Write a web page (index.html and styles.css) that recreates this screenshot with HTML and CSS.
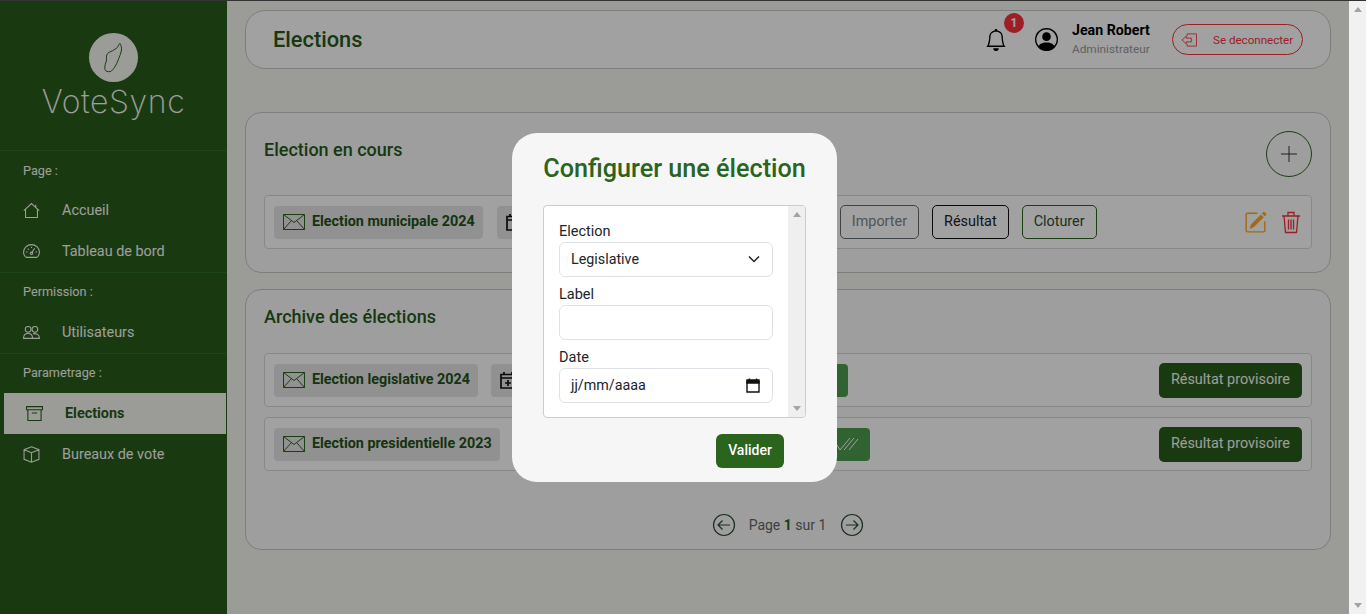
FILE: index.html
```html
<!DOCTYPE html>
<html lang="fr">
<head>
    <meta charset="UTF-8">
    <meta name="viewport" content="width=device-width, initial-scale=1.0">
    <title>VoteSync - Elections</title>
    <link rel="stylesheet" href="styles.css">
</head>
<body>
    <div class="app">
        <aside class="sidebar">
            <div class="brand">
                <div class="brand-logo">
                    <svg width="49" height="49" viewBox="0 0 49 49"><path d="M30.8 10.3C32 12 32.8 14.5 32.5 17C32 20 31 22.5 29.8 25.3C28.5 29 27 32.5 24.8 35.3C23.5 37.5 21.5 38.9 19.8 38.7C17.2 38.5 15.5 37.5 15.8 35.3C15.6 32 17 30 17.5 27C17.2 24 17.5 21.5 18.8 20.3C20.5 18.5 23 18.5 24.8 17C26.5 15.5 28 15.5 28.8 13.7C29.5 12.5 30 11 30.8 10.3Z" fill="none" stroke="#2a641d"/></svg>
                </div>
                <div class="brand-name">VoteSync</div>
            </div>
            <div class="nav-section">
                <div class="nav-label">Page :</div>
                <a class="nav-item"><svg class="nav-icon" viewBox="0 0 16 16"><path d="M.8 8.2 8 1.5l7.2 6.7M2.400 7v7.500h11.200V7M12 5V2.600"/></svg>Accueil</a>
                <a class="nav-item"><svg class="nav-icon" viewBox="0 0 16 16"><path d="M3 13.500h10C14.500 12.500 15.500 10.500 15.500 8.500A7.500 7 0 0 0 .5 8.500C.5 10.500 1.500 12.500 3 13.500ZM8 9.500 11 5M2.700 8.500h1.500M11.800 8.500h1.500M4.500 5.200l1 1M8 3.500v1.300"/><circle cx="8" cy="9.700" r="1.200"/></svg>Tableau de bord</a>
            </div>
            <div class="nav-section">
                <div class="nav-label">Permission :</div>
                <a class="nav-item"><svg class="nav-icon" viewBox="0 0 16 16"><circle cx="4.800" cy="5" r="2.700"/><circle cx="11.200" cy="5" r="2.700"/><path d="M.5 13.500C.5 10.500 2.500 9 4.800 9S9 10.500 9 13.500ZM9.500 9.300C12.500 8.500 15.500 10 15.500 13.500H9"/></svg>Utilisateurs</a>
            </div>
            <div class="nav-section nav-section-last">
                <div class="nav-label">Parametrage :</div>
                <a class="nav-item nav-item-active"><svg class="nav-icon" viewBox="0 0 16 16"><path d="M.5 1.500h15v3H.5ZM1.800 4.500v10h12.400v-10M5.500 7.500h5"/></svg>Elections</a>
                <a class="nav-item"><svg class="nav-icon" viewBox="0 0 16 16"><path d="M8 .7 15 3.500v9L8 15.300 1 12.500v-9ZM1 3.500l7 2.800 7-2.800M8 6.300v9"/></svg>Bureaux de vote</a>
            </div>
        </aside>

        <main class="main">
            <header class="topbar">
                <h1 class="page-title">Elections</h1>
                <div class="topbar-right">
                    <div class="bell">
                        <svg width="22" height="22" viewBox="0 0 16 16" fill="#000"><path d="M8 16a2 2 0 0 0 2-2H6a2 2 0 0 0 2 2zM8 1.918l-.797.161A4.002 4.002 0 0 0 4 6c0 .628-.134 2.197-.459 3.742-.16.767-.376 1.566-.663 2.258h10.244c-.287-.692-.502-1.490-.663-2.258C12.134 8.197 12 6.628 12 6a4.002 4.002 0 0 0-3.203-3.920L8 1.917zM14.220 12c.223.447.481.801.78 1H1c.299-.199.557-.553.78-1C2.680 10.200 3 6.880 3 6c0-2.420 1.720-4.440 4.005-4.901a1 1 0 1 1 1.990 0A5.002 5.002 0 0 1 13 6c0 .880.320 4.200 1.220 6z"/></svg>
                        <span class="badge">1</span>
                    </div>
                    <svg class="avatar" width="23" height="23" viewBox="0 0 16 16" fill="#000"><path d="M11 6a3 3 0 1 1-6 0 3 3 0 0 1 6 0z"/><path fill-rule="evenodd" d="M0 8a8 8 0 1 1 16 0A8 8 0 0 1 0 8zm8-7a7 7 0 0 0-5.468 11.370C3.242 11.226 4.805 10 8 10s4.757 1.225 5.468 2.370A7 7 0 0 0 8 1z"/></svg>
                    <div class="user">
                        <div class="user-name">Jean Robert</div>
                        <div class="user-role">Administrateur</div>
                    </div>
                    <button class="logout">
                        <svg width="16" height="14" viewBox="0 0 17 14" fill="none" stroke="#f5323a" stroke-width=".9"><path d="M6.500 3V.5h10v13h-10V11M11 5H5.500V3L1 7l4.500 4V9H11Z"/></svg>
                        Se deconnecter
                    </button>
                </div>
            </header>

            <section class="card">
                <div class="card-head">
                    <h2 class="card-title">Election en cours</h2>
                    <button class="add-btn"><svg width="20" height="20" viewBox="0 0 20 20" stroke="#333"><path d="M10 2v16M2 10h16"/></svg></button>
                </div>
                <div class="row">
                    <div class="chip chip-name">
                        <svg class="mail" viewBox="0 0 22 16"><path d="M.5.5h21v15H.500ZM.5.5 11 8.500 21.500.5M.5 15.500 8 7M21.500 15.500 14 7"/></svg>
                        Election municipale 2024
                    </div>
                    <div class="chip chip-date chip-date-long">
                        <svg class="cal" viewBox="0 0 16 18"><path d="M1 3.500h14v13.500H1ZM4 1v3M12 1v3M1 7h14"/></svg>
                    </div>
                    <button class="btn-line btn-import">Importer</button>
                    <button class="btn-line btn-result">Résultat</button>
                    <button class="btn-line btn-close">Cloturer</button>
                    <div class="row-actions">
                        <svg width="23" height="23" viewBox="0 0 16 16" fill="#ffaa1e"><path d="M15.502 1.940a.5.5 0 0 1 0 .706L14.459 3.690l-2-2L13.502.646a.5.5 0 0 1 .707 0l1.293 1.293zm-1.750 2.456-2-2L4.939 9.210a.5.5 0 0 0-.121.196l-.805 2.414a.25.25 0 0 0 .316.316l2.414-.805a.5.5 0 0 0 .196-.120l6.813-6.814z"/><path d="M1 13.500A1.500 1.500 0 0 0 2.500 15h11a1.500 1.500 0 0 0 1.500-1.500v-6a.5.5 0 0 0-1 0v6a.5.5 0 0 1-.5.5h-11a.5.5 0 0 1-.5-.5v-11a.5.5 0 0 1 .5-.5H9a.5.5 0 0 0 0-1H2.500A1.500 1.500 0 0 0 1 2.500v11z"/></svg>
                        <svg width="20" height="23" viewBox="0 0 20 23" fill="none" stroke="#f5323a" stroke-width="1.300"><path d="M1 5h18M7 5V1.500h6V5M3 5l1.500 16.500h11L17 5M7.500 8.500v10M10 8.500v10M12.500 8.500v10"/></svg>
                    </div>
                </div>
            </section>

            <section class="card card-archive">
                <div class="card-head">
                    <h2 class="card-title">Archive des élections</h2>
                </div>
                <div class="row">
                    <div class="chip chip-name">
                        <svg class="mail" viewBox="0 0 22 16"><path d="M.5.5h21v15H.500ZM.5.5 11 8.500 21.500.5M.5 15.500 8 7M21.500 15.500 14 7"/></svg>
                        Election legislative 2024
                    </div>
                    <div class="chip chip-date">
                        <svg class="cal" viewBox="0 0 16 18"><path d="M1 3.500h14v13.500H1ZM4 1v3M12 1v3M1 7h14M8 9v6M5 12h6"/></svg>
                    </div>
                    <div class="status"><svg width="23" height="14" viewBox="0 0 23 14" fill="none" stroke="#fff"><path d="M1 8l3 5L14 1M8 13 18 1M13 13 22 2"/></svg></div>
                    <button class="btn-solid">Résultat provisoire</button>
                </div>
                <div class="row">
                    <div class="chip chip-name">
                        <svg class="mail" viewBox="0 0 22 16"><path d="M.5.5h21v15H.500ZM.5.5 11 8.500 21.500.5M.5 15.500 8 7M21.500 15.500 14 7"/></svg>
                        Election presidentielle 2023
                    </div>
                    <div class="chip chip-date">
                        <svg class="cal" viewBox="0 0 16 18"><path d="M1 3.500h14v13.500H1ZM4 1v3M12 1v3M1 7h14M8 9v6M5 12h6"/></svg>
                    </div>
                    <div class="status"><svg width="23" height="14" viewBox="0 0 23 14" fill="none" stroke="#fff"><path d="M1 8l3 5L14 1M8 13 18 1M13 13 22 2"/></svg></div>
                    <button class="btn-solid">Résultat provisoire</button>
                </div>
                <div class="pager">
                    <svg class="pager-arrow" viewBox="0 0 24 24"><circle cx="12" cy="12" r="10.500"/><path d="M18 12H6M10.500 7.500 6 12l4.500 4.500"/></svg>
                    <span class="pager-text">Page <b>1</b> sur 1</span>
                    <svg class="pager-arrow" viewBox="0 0 24 24"><circle cx="12" cy="12" r="10.500"/><path d="M6 12h12M13.500 7.500 18 12l-4.500 4.500"/></svg>
                </div>
            </section>
        </main>

        <div class="overlay">
            <div class="modal">
                <h2 class="modal-title">Configurer une élection</h2>
                <div class="modal-box">
                    <form class="modal-form">
                        <label class="field-label">Election</label>
                        <div class="field">
                            Legislative
                            <svg width="12" height="8" viewBox="0 0 12 8" fill="none" stroke="#222" stroke-width="1.500"><path d="M1 1.500 6 6.500 11 1.500"/></svg>
                        </div>
                        <label class="field-label">Label</label>
                        <div class="field"></div>
                        <label class="field-label">Date</label>
                        <div class="field">
                            jj/mm/aaaa
                            <svg width="14" height="15" viewBox="0 0 14 15" fill="none" stroke="#111" stroke-width="1.400"><path d="M1 3.500h12v10.500H1ZM3.500.500v2M10.500.500v2"/><path d="M1 2h12v3H1Z" fill="#111"/></svg>
                        </div>
                    </form>
                    <div class="mini-scroll">
                        <span class="arrow-up"></span>
                        <span class="arrow-down"></span>
                    </div>
                </div>
                <button class="modal-submit">Valider</button>
            </div>
        </div>
    </div>
    <div class="page-scroll">
        <span class="arrow-up"></span>
        <span class="arrow-down"></span>
    </div>
</body>
</html>
```

FILE: styles.css
```css
* {
    box-sizing: border-box;
}
html, body {
    height: 100%;
}
body {
    margin: 0;
    display: flex;
    height: 614px;
    overflow: hidden;
    border-top: 1px solid #333;
    font-family: Roboto, "Liberation Sans", sans-serif;
    background-color: #f6f6f1;
    color: #333;
}
button {
    font-family: inherit;
    cursor: pointer;
}
.app {
    position: relative;
    flex: 1;
    display: flex;
    min-width: 0;
}
.page-scroll {
    width: 17px;
    flex-shrink: 0;
    padding: 6px 0;
    display: flex;
    flex-direction: column;
    align-items: center;
    justify-content: space-between;
    background-color: #f1f1f1;
}
.arrow-up, .arrow-down {
    display: block;
    width: 0;
    height: 0;
    border-left: 4px solid transparent;
    border-right: 4px solid transparent;
}
.arrow-up {
    border-bottom: 5px solid #a3a3a3;
}
.arrow-down {
    border-top: 5px solid #a3a3a3;
}

/* sidebar */
.sidebar {
    width: 227px;
    flex-shrink: 0;
    background-color: #285d1c;
    color: #fafaf5;
}
.brand {
    height: 150px;
    padding-top: 32px;
    display: flex;
    flex-direction: column;
    align-items: center;
    border-bottom: 1px solid #32702a;
}
.brand-logo {
    width: 49px;
    height: 49px;
    border-radius: 50%;
    background-color: #f6f6f1;
}
.brand-name {
    font-family: Inter, sans-serif;
    font-weight: 200;
    font-size: 32px;
    line-height: 40px;
    margin-top: 0;
    letter-spacing: .6px;
}
.nav-section {
    border-bottom: 1px solid #32702a;
}
.nav-section-last {
    border-bottom: none;
}
.nav-label {
    height: 39px;
    line-height: 38px;
    padding-left: 23px;
    font-size: 12.7px;
}
.nav-section:nth-child(2) .nav-label {
    line-height: 39px;
}
.nav-item {
    height: 41px;
    padding: 0 0 1px 23px;
    display: flex;
    align-items: center;
    font-size: 14.4px;
}
.nav-icon {
    width: 17px;
    height: 17px;
    margin-right: 22px;
    fill: none;
    stroke: currentColor;
    stroke-width: 1;
}
.nav-item-active {
    margin: 0 1px 0 4px;
    padding-left: 22px;
    background-color: #f6f6f1;
    color: #255a1a;
    font-weight: 700;
}

/* main area */
.main {
    flex: 1;
    min-width: 0;
    padding: 9px 18px 0;
}
.topbar {
    height: 59px;
    margin-bottom: 43px;
    padding: 0 27px;
    display: flex;
    align-items: center;
    justify-content: space-between;
    border: 1px solid #c8c8c8;
    border-radius: 20px;
    background-color: #fff;
}
.page-title {
    margin: 0;
    font-size: 21.8px;
    font-weight: 500;
    color: #255a1a;
}
.topbar-right {
    display: flex;
    align-items: center;
}
.bell {
    position: relative;
    height: 22px;
    margin-right: 28px;
}
.badge {
    position: absolute;
    top: -16px;
    left: 19px;
    width: 20px;
    height: 20px;
    line-height: 20px;
    text-align: center;
    border-radius: 50%;
    background-color: #f5323a;
    color: #fff;
    font-size: 12px;
    font-weight: 700;
}
.avatar {
    margin-right: 14px;
}
.user {
    width: 100px;
    margin-top: -1px;
}
.user-name {
    font-size: 14.2px;
    font-weight: 700;
    line-height: 18px;
    color: #000;
}
.user-role {
    margin-top: 2px;
    font-size: 11.8px;
    line-height: 16px;
    color: #999;
}
.logout {
    width: 131px;
    height: 31px;
    padding: 0 0 0 8px;
    display: flex;
    align-items: center;
    gap: 16px;
    background: none;
    border: 1px solid #f5323a;
    border-radius: 16px;
    color: #f5323a;
    font-size: 11.6px;
}

/* cards */
.card {
    margin-bottom: 16px;
    padding: 18px 18px 23px;
    border: 1px solid #c8c8c8;
    border-radius: 16px;
    background-color: #fbfbfb;
}
.card-head {
    display: flex;
    justify-content: space-between;
    align-items: flex-start;
    margin-bottom: 18px;
}
.card-title {
    margin: 0;
    font-size: 18px;
    font-weight: 500;
    line-height: 38px;
    color: #255a1a;
}
.card-archive {
    padding-top: 8px;
    padding-bottom: 12px;
}
.card-archive .card-head {
    margin-bottom: 17px;
}
.add-btn {
    width: 46px;
    height: 46px;
    padding: 0;
    display: flex;
    align-items: center;
    justify-content: center;
    background: none;
    border: 1px solid #2a641d;
    border-radius: 50%;
}
.row {
    height: 54px;
    margin-bottom: 10px;
    padding: 0 9px;
    display: flex;
    align-items: center;
    border: 1px solid #d8d8d8;
    border-radius: 4px;
    background-color: #fff;
}
.card > .row:last-child {
    margin-bottom: 0;
}
.chip {
    height: 33px;
    display: flex;
    align-items: center;
    border-radius: 4px;
    background-color: #e6e6e6;
}
.chip-name {
    padding: 0 8px 1px 9px;
    color: #225217;
    font-size: 14.35px;
    font-weight: 700;
}
.mail {
    width: 22px;
    height: 16px;
    margin-right: 7px;
    fill: none;
    stroke: #2a641d;
}
.chip-date {
    width: 300px;
    margin-left: 13px;
    padding-left: 9px;
}
.chip-date-long {
    width: 330px;
    margin-left: 14px;
    margin-right: 13px;
}
.cal {
    width: 16px;
    height: 20px;
    fill: none;
    stroke: #111;
    stroke-width: 1.700;
}
.status {
    width: 44px;
    height: 33px;
    margin-left: 13px;
    display: flex;
    align-items: center;
    justify-content: center;
    border-radius: 4px;
    background-color: #4f9c4f;
}
.btn-line {
    height: 34px;
    padding: 0 11px 1px;
    margin-right: 13px;
    background: none;
    border: 1px solid #111;
    border-radius: 5px;
    font-size: 14.4px;
    color: #222;
}
.btn-import {
    border-color: #666c72;
    color: #7f858a;
}
.btn-close {
    border-color: #2a641d;
    color: #2a5030;
}
.row-actions {
    margin-left: auto;
    padding-right: 1px;
    display: flex;
    align-items: center;
    gap: 14px;
}
.btn-solid {
    height: 35px;
    margin-left: auto;
    padding: 0 12px 1px;
    border: none;
    border-radius: 5px;
    background-color: #285d1c;
    color: #fafaf5;
    font-size: 14.4px;
}
.pager {
    margin-top: 42px;
    display: flex;
    justify-content: center;
    align-items: center;
    gap: 13px;
}
.pager-arrow {
    width: 24px;
    height: 24px;
    fill: none;
    stroke: #2a4a30;
    stroke-width: 1.200;
}
.pager-text {
    margin-right: 1px;
    font-size: 14px;
    color: #666;
}
.pager-text b {
    color: #2a641d;
}

/* modal */
.overlay {
    position: absolute;
    inset: 0;
    display: flex;
    align-items: center;
    justify-content: center;
    background-color: rgba(0, 0, 0, .37);
}
.modal {
    width: 325px;
    height: 349px;
    padding: 21px 31px 14px;
    display: flex;
    flex-direction: column;
    border-radius: 25px;
    background-color: #f6f6f6;
}
.modal-title {
    margin: 0 0 21px;
    font-size: 25.2px;
    font-weight: 500;
    line-height: 30px;
    white-space: nowrap;
    text-align: center;
    color: #2a641d;
}
.modal-box {
    height: 213px;
    display: flex;
    border: 1px solid #ccc;
    border-radius: 4px;
    background-color: #fff;
    overflow: hidden;
}
.modal-form {
    flex: 1;
    padding: 14px 15px 0;
}
.field-label {
    display: block;
    margin-top: 6px;
    padding-top: 1px;
    line-height: 21px;
    font-size: 14.5px;
    color: #212529;
}
.modal-form .field-label:first-child {
    margin-top: 0;
}
.field {
    height: 35px;
    padding: 0 12px 1px 11px;
    display: flex;
    align-items: center;
    justify-content: space-between;
    border: 1px solid #dee2e6;
    border-radius: 6px;
    background-color: #fff;
    font-size: 14.3px;
    color: #212529;
}
.mini-scroll {
    width: 17px;
    padding: 6px 0;
    display: flex;
    flex-direction: column;
    align-items: center;
    justify-content: space-between;
    background-color: #efefef;
}
.modal-submit {
    align-self: flex-end;
    width: 68px;
    height: 34px;
    margin: 16px 22px 0 0;
    padding: 0 0 2px;
    border: none;
    border-radius: 6px;
    background-color: #2a641d;
    color: #fff;
    font-size: 14px;
    font-weight: 500;
}
```
